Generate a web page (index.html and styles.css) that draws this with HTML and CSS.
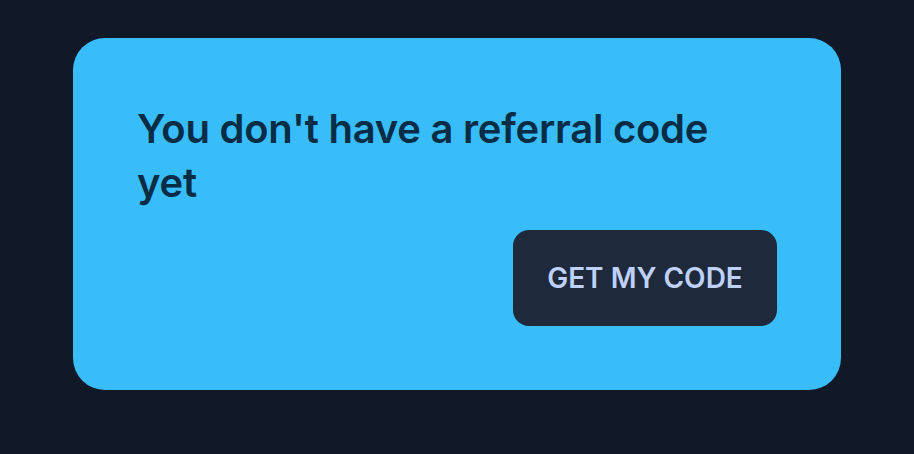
FILE: index.html
```html
<!DOCTYPE html>
<html lang="en">
<head>
<meta charset="utf-8">
<title>Referral</title>
<link rel="stylesheet" href="styles.css">
</head>
<body>
<main class="page">
  <section class="card">
    <h2 class="card-title">You don't have a referral code yet</h2>
    <div class="card-actions">
      <button class="btn" type="button">GET MY CODE</button>
    </div>
  </section>
</main>
</body>
</html>
```

FILE: styles.css
```css
* { box-sizing: border-box; }
html, body { margin: 0; padding: 0; }
body {
  background: #111827;
  font-family: Inter, "Noto Sans", sans-serif;
  width: 914px;
  height: 454px;
  overflow: hidden;
}
.page {
  padding: 38px 73px;
}
.card {
  width: 768px;
  height: 352px;
  background: #38bdf8;
  border-radius: 32px;
  padding: 64px;
  display: flex;
  flex-direction: column;
}
.card-title {
  margin: 0;
  font-size: 40px;
  line-height: 54px;
  font-weight: 600;
  letter-spacing: -0.25px;
  color: #072c45;
}
.card-actions {
  margin-top: auto;
  display: flex;
  justify-content: flex-end;
}
.btn {
  width: 264px;
  height: 96px;
  border: 0;
  border-radius: 16px;
  background: #1e293b;
  color: #bfd1f8;
  font-family: Inter, "Noto Sans", sans-serif;
  font-size: 28px;
  font-weight: 600;
  cursor: pointer;
}
```
